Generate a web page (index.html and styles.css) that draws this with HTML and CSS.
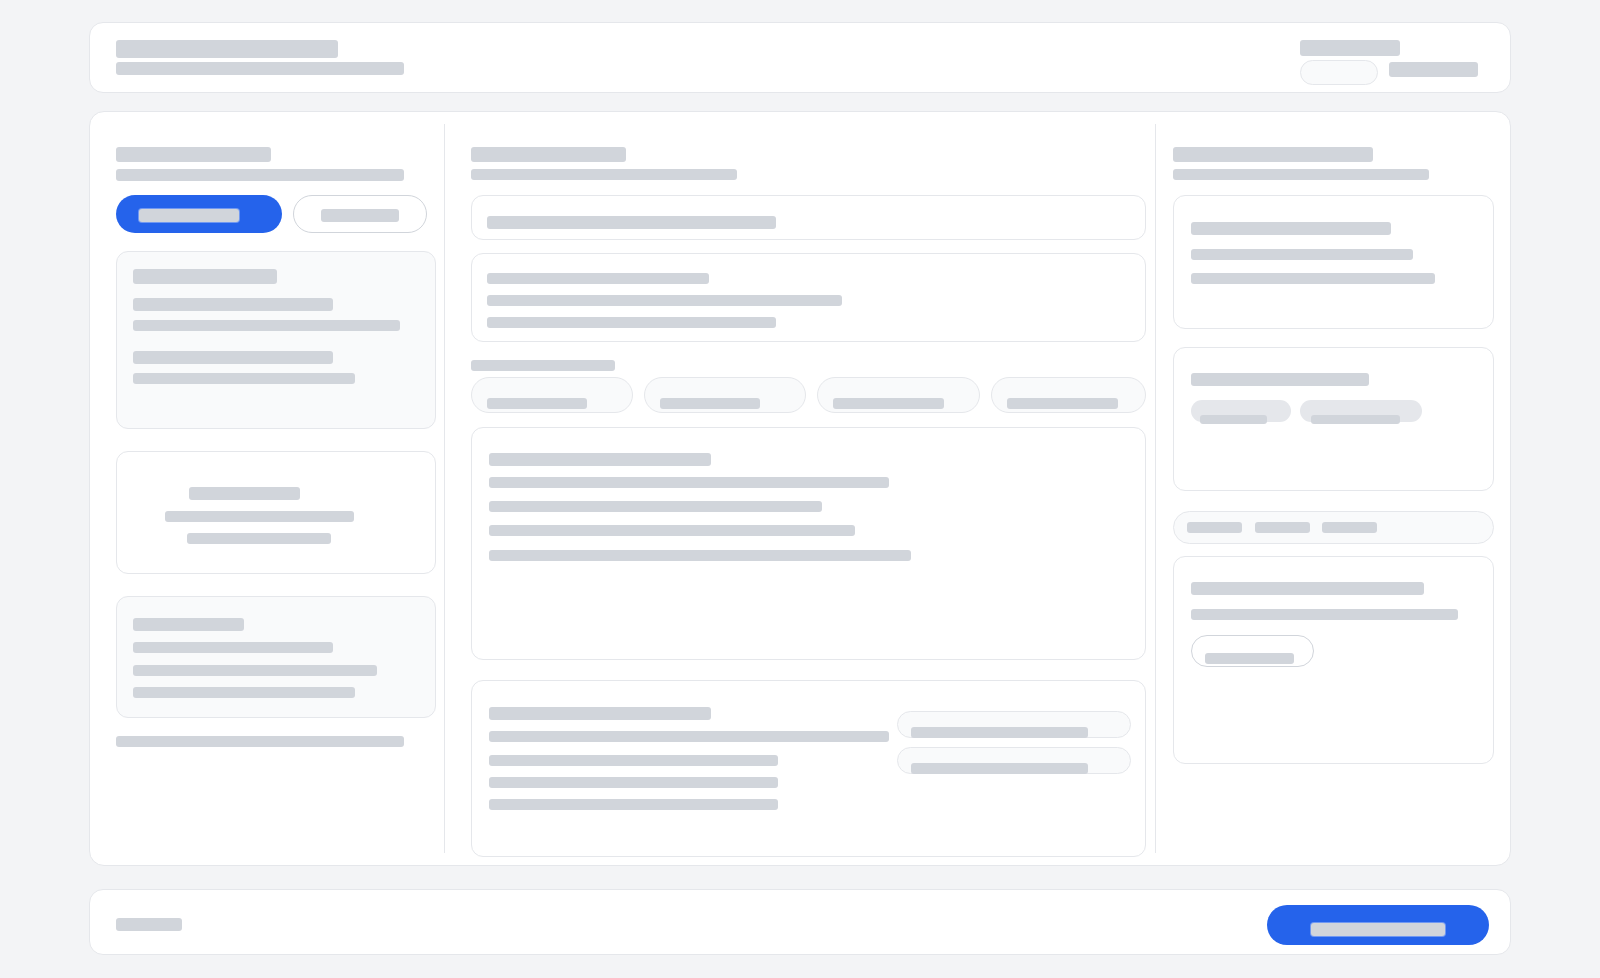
FILE: index.html
```html
<!DOCTYPE html>
<html lang="en">
<head>
<meta charset="utf-8">
<title>Skeleton</title>
<link rel="stylesheet" href="styles.css">
</head>
<body>
<div class="page">
  <header class="panel header">
    <div class="header-left">
      <div class="bar w222 h18"></div>
      <div class="bar w288 h13 mt4"></div>
    </div>
    <div class="header-right">
      <div class="bar w100 h16"></div>
      <div class="header-row">
        <div class="soft-pill"></div>
        <div class="bar w89 h15 mt2"></div>
      </div>
    </div>
  </header>

  <main class="panel main">
    <section class="col col-left">
      <div class="bar w155 h15"></div>
      <div class="bar w288 h12 mt7"></div>
      <div class="btn-row">
        <div class="btn-primary"><div class="bar w100 h13 light"></div></div>
        <div class="btn-outline"><div class="bar w78 h13"></div></div>
      </div>
      <div class="card gray lcard1">
        <div class="bar w144 h15"></div>
        <div class="bar w200 h13 mt14"></div>
        <div class="bar w267 h11 mt9"></div>
        <div class="bar w200 h13 mt20"></div>
        <div class="bar w222 h11 mt9"></div>
      </div>
      <div class="card lcard2">
        <div class="bar w111 h13 ml72"></div>
        <div class="bar w189 h11 mt11 ml48"></div>
        <div class="bar w144 h11 mt11 ml70"></div>
      </div>
      <div class="card gray lcard3">
        <div class="bar w111 h13"></div>
        <div class="bar w200 h11 mt11"></div>
        <div class="bar w244 h11 mt12"></div>
        <div class="bar w222 h11 mt11"></div>
      </div>
      <div class="bar w288 h11 mt18"></div>
    </section>

    <section class="col col-mid">
      <div class="bar w155 h15"></div>
      <div class="bar w266 h11 mt7"></div>
      <div class="card search">
        <div class="bar w289 h13"></div>
      </div>
      <div class="card mcard2">
        <div class="bar w222 h11"></div>
        <div class="bar w355 h11 mt11"></div>
        <div class="bar w289 h11 mt11"></div>
      </div>
      <div class="bar w144 h11 mt18"></div>
      <div class="chips">
        <div class="chip c162"><div class="bar w100 h11"></div></div>
        <div class="chip c162"><div class="bar w100 h11"></div></div>
        <div class="chip c163"><div class="bar w111 h11"></div></div>
        <div class="chip c155"><div class="bar w111 h11"></div></div>
      </div>
      <div class="card big">
        <div class="bar w222 h13"></div>
        <div class="bar w400 h11 mt11"></div>
        <div class="bar w333 h11 mt13"></div>
        <div class="bar w366 h11 mt13"></div>
        <div class="bar w422 h11 mt14"></div>
      </div>
      <div class="card split">
        <div class="split-left">
          <div class="bar w222 h13"></div>
          <div class="bar w400 h11 mt11"></div>
          <div class="bar w289 h11 mt13"></div>
          <div class="bar w289 h11 mt11"></div>
          <div class="bar w289 h11 mt11"></div>
        </div>
        <div class="split-right">
          <div class="row-pill"><div class="bar w177 h11"></div></div>
          <div class="row-pill mt9"><div class="bar w177 h11"></div></div>
        </div>
      </div>
    </section>

    <section class="col col-right">
      <div class="bar w200 h15"></div>
      <div class="bar w256 h11 mt7"></div>
      <div class="card rcardA">
        <div class="bar w200 h13"></div>
        <div class="bar w222 h11 mt14"></div>
        <div class="bar w244 h11 mt13"></div>
      </div>
      <div class="card rcardB">
        <div class="bar w178 h13"></div>
        <div class="tags">
          <div class="tag t100"><div class="bar w67 h9"></div></div>
          <div class="tag t122"><div class="bar w89 h9"></div></div>
        </div>
      </div>
      <div class="seg">
        <div class="bar w55 h11"></div>
        <div class="bar w55 h11"></div>
        <div class="bar w55 h11"></div>
      </div>
      <div class="card rcardC">
        <div class="bar w233 h13"></div>
        <div class="bar w267 h11 mt14"></div>
        <div class="btn-small"><div class="bar w89 h11"></div></div>
      </div>
    </section>
  </main>

  <footer class="panel footer">
    <div class="bar w66 h13"></div>
    <div class="btn-cta"><div class="bar w134 h13 light"></div></div>
  </footer>
</div>
</body>
</html>
```

FILE: styles.css
```css
* { box-sizing: border-box; }

html, body {
  margin: 0;
  padding: 0;
  background: #f3f4f6;
  font-family: "Inter", "Liberation Sans", sans-serif;
}

.page {
  width: 1422px;
  margin: 0 auto;
  padding-top: 22px;
}

.panel {
  background: #ffffff;
  border: 1px solid #e5e7eb;
  border-radius: 14px;
}

/* skeleton bars */
.bar {
  background: #d1d5db;
  border-radius: 3px;
  flex: none;
}
.bar.light { background: #d1d5db; box-shadow: 0 0 0 1px rgba(255,255,255,0.35); }

.h9 { height: 9px; }
.h11 { height: 11px; }
.h12 { height: 12px; }
.h13 { height: 13px; }
.h15 { height: 15px; }
.h16 { height: 16px; }
.h18 { height: 18px; }

.w55 { width: 55px; }
.w66 { width: 66px; }
.w67 { width: 67px; }
.w78 { width: 78px; }
.w89 { width: 89px; }
.w100 { width: 100px; }
.w111 { width: 111px; }
.w134 { width: 134px; }
.w144 { width: 144px; }
.w155 { width: 155px; }
.w177 { width: 177px; }
.w178 { width: 178px; }
.w189 { width: 189px; }
.w200 { width: 200px; }
.w222 { width: 222px; }
.w233 { width: 233px; }
.w244 { width: 244px; }
.w256 { width: 256px; }
.w266 { width: 266px; }
.w267 { width: 267px; }
.w288 { width: 288px; }
.w289 { width: 289px; }
.w333 { width: 333px; }
.w355 { width: 355px; }
.w366 { width: 366px; }
.w400 { width: 400px; }
.w422 { width: 422px; }

.mt2 { margin-top: 2px; }
.mt4 { margin-top: 4px; }
.mt7 { margin-top: 7px; }
.mt9 { margin-top: 9px; }
.mt11 { margin-top: 11px; }
.mt12 { margin-top: 12px; }
.mt13 { margin-top: 13px; }
.mt14 { margin-top: 14px; }
.mt18 { margin-top: 18px; }
.mt20 { margin-top: 20px; }
.ml48 { margin-left: 48px; }
.ml70 { margin-left: 70px; }
.ml72 { margin-left: 72px; }

/* header */
.header {
  height: 71px;
  display: flex;
  justify-content: space-between;
  padding: 17px 32px 0 26px;
}
.header-right {
  width: 178px;
}
.header-row {
  display: flex;
  gap: 11px;
  margin-top: 4px;
}
.soft-pill {
  width: 78px;
  height: 25px;
  border: 1px solid #e5e7eb;
  background: #f9fafb;
  border-radius: 13px;
}

/* main */
.main {
  margin-top: 18px;
  height: 755px;
  padding: 12px 16px 12px 26px;
  display: grid;
  grid-template-columns: 329px 711px 338px;
  grid-template-rows: minmax(0, 1fr);
  border-radius: 15px;
}
.col {
  padding-top: 23px;
  min-height: 0;
}
.col-left {
  padding-right: 8px;
  border-right: 1px solid #e5e7eb;
}
.col-mid {
  padding-left: 26px;
  padding-right: 9px;
  border-right: 1px solid #e5e7eb;
}
.col-right {
  padding-left: 17px;
}

.card {
  border: 1px solid #e5e7eb;
  border-radius: 12px;
  background: #ffffff;
}
.card.gray { background: #f9fafb; }

/* left column */
.btn-row {
  display: flex;
  gap: 11px;
  margin-top: 14px;
}
.btn-primary {
  width: 166px;
  height: 38px;
  border-radius: 19px;
  background: #2563eb;
  display: flex;
  align-items: center;
  padding: 2px 0 0 23px;
}
.btn-outline {
  width: 134px;
  height: 38px;
  border-radius: 19px;
  border: 1px solid #d1d5db;
  background: #ffffff;
  display: flex;
  align-items: center;
  justify-content: center;
  padding-top: 2px;
}
.lcard1 {
  margin-top: 18px;
  height: 178px;
  padding: 17px 16px;
}
.lcard2 {
  margin-top: 22px;
  height: 123px;
  padding: 35px 0 0 0;
}
.lcard3 {
  margin-top: 22px;
  height: 122px;
  padding: 21px 16px;
}

/* middle column */
.search {
  margin-top: 15px;
  height: 45px;
  padding: 20px 15px 0;
}
.mcard2 {
  margin-top: 13px;
  height: 89px;
  padding: 19px 15px 0;
}
.chips {
  display: flex;
  gap: 11px;
  margin-top: 6px;
}
.chip {
  height: 36px;
  border: 1px solid #e5e7eb;
  background: #f9fafb;
  border-radius: 18px;
  padding: 20px 15px 0;
}
.c162 { width: 162px; }
.c163 { width: 163px; }
.c155 { width: 155px; }

.big {
  margin-top: 14px;
  height: 233px;
  padding: 25px 17px 0;
}
.split {
  margin-top: 20px;
  height: 177px;
  padding: 26px 14px 0 17px;
  display: flex;
  align-items: flex-start;
}
.split-left {
  width: 400px;
  margin-right: 8px;
}
.split-right {
  width: 234px;
  margin-top: 4px;
}
.row-pill {
  height: 27px;
  border: 1px solid #e5e7eb;
  background: #f9fafb;
  border-radius: 14px;
  padding: 15px 0 0 13px;
}

/* right column */
.rcardA {
  margin-top: 15px;
  height: 134px;
  padding: 26px 17px 0;
}
.rcardB {
  margin-top: 18px;
  height: 144px;
  padding: 25px 17px 0;
}
.tags {
  display: flex;
  gap: 9px;
  margin-top: 14px;
}
.tag {
  height: 22px;
  border-radius: 11px;
  background: #e5e7eb;
  padding-top: 15px;
}
.t100 { width: 100px; padding-left: 9px; }
.t122 { width: 122px; padding-left: 11px; }

.seg {
  margin-top: 20px;
  height: 33px;
  border: 1px solid #e5e7eb;
  background: #f9fafb;
  border-radius: 17px;
  display: flex;
  align-items: center;
  gap: 12.5px;
  padding-left: 13px;
}
.rcardC {
  margin-top: 12px;
  height: 208px;
  padding: 25px 17px 0;
}
.btn-small {
  margin-top: 15px;
  width: 123px;
  height: 32px;
  border: 1px solid #d1d5db;
  border-radius: 16px;
  padding: 17px 0 0 13px;
}

/* footer */
.footer {
  margin-top: 23px;
  height: 66px;
  display: flex;
  align-items: center;
  justify-content: space-between;
  padding: 5px 21px 0 26px;
}
.btn-cta {
  width: 222px;
  height: 40px;
  border-radius: 20px;
  background: #2563eb;
  display: flex;
  justify-content: center;
  align-items: center;
  padding-top: 9px;
}
```
